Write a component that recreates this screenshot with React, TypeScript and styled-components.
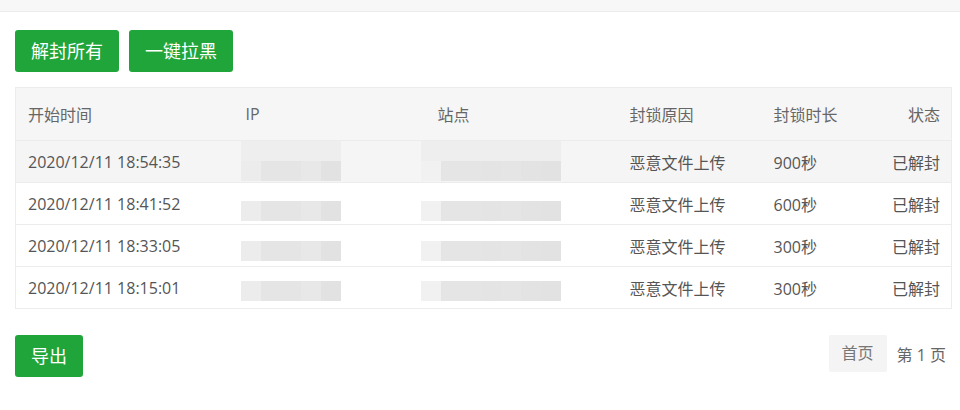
import React, { ReactElement } from 'react'
import styled, { createGlobalStyle } from 'styled-components'

const GlobalStyle = createGlobalStyle`
    html, body {
        margin: 0;
        padding: 0;
        background: #fff;
    }
    body {
        font-family: "Open Sans", "Noto Sans CJK SC", sans-serif;
        color: #666;
    }
`

interface BanRecord {
    time: string;
    reason: string;
    duration: string;
    status: string;
}

const records: BanRecord[] = [
    { time: '2020/12/11 18:54:35', reason: '恶意文件上传', duration: '900秒', status: '已解封' },
    { time: '2020/12/11 18:41:52', reason: '恶意文件上传', duration: '600秒', status: '已解封' },
    { time: '2020/12/11 18:33:05', reason: '恶意文件上传', duration: '300秒', status: '已解封' },
    { time: '2020/12/11 18:15:01', reason: '恶意文件上传', duration: '300秒', status: '已解封' },
]

// redacted cells are shown as a pixel mosaic
const ipTiles = ['#ececec', '#e5e5e5', '#e5e5e5', '#e8e8e8', '#e2e2e2']
const siteTiles = ['#f1f1f1', '#e5e5e5', '#e5e5e5', '#e4e4e4', '#e5e5e5', '#e3e3e3', '#e2e2e2']
const mosaicTops = [0, 18, 16, 14]

const TopStrip = styled.div`
    height: 11px;
    background: #f7f7f7;
    border-bottom: 1px solid #ececec;
`
const Content = styled.div`
    padding: 18px 8px 0 15px;
`
const Toolbar = styled.div`
    display: flex;
    gap: 10px;
    margin-bottom: 15px;
`
const GreenButton = styled.button`
    height: 42px;
    padding: 0 16px;
    border: none;
    border-radius: 3px;
    background: #20a53a;
    color: #fff;
    font-family: "Open Sans", "Noto Sans CJK SC", sans-serif;
    font-size: 18px;
    line-height: 42px;
    cursor: pointer;
`
const Table = styled.table`
    width: 937px;
    border-collapse: collapse;
    table-layout: fixed;
    border: 1px solid #ececec;
    font-size: 16px;
`
const HeadCell = styled.th<{ $right?: boolean }>`
    height: 52px;
    padding: 0 11px 0 12px;
    background: #f6f6f6;
    font-weight: normal;
    color: #666;
    text-align: ${p => (p.$right ? 'right' : 'left')};
    border-bottom: 1px solid #ececec;
`
const Row = styled.tr<{ $hover?: boolean }>`
    background: ${p => (p.$hover ? '#f5f5f5' : '#fff')};
`
const Cell = styled.td<{ $right?: boolean }>`
    height: 41px;
    padding: 0 11px 0 12px;
    color: #555;
    text-align: ${p => (p.$right ? 'right' : 'left')};
    border-bottom: 1px solid #ececec;
    white-space: nowrap;
`
const MosaicCell = styled.td`
    height: 41px;
    padding: 0 0 0 7px;
    border-bottom: 1px solid #ececec;
    vertical-align: top;
`
const Mosaic = styled.div<{ $top: number; $shift: number }>`
    display: flex;
    flex-direction: column;
    margin-top: ${p => p.$top}px;
    margin-left: ${p => p.$shift}px;
`
const TileRow = styled.div`
    display: flex;
`
const Tile = styled.span<{ $shade: string }>`
    width: 20px;
    height: 20px;
    background: ${p => p.$shade};
`
const Footer = styled.div`
    display: flex;
    justify-content: space-between;
    align-items: flex-start;
    margin-top: 26px;
`
const Pager = styled.div`
    display: flex;
    align-items: center;
    gap: 10px;
    font-size: 16px;
    color: #666;
`
const PageLink = styled.span`
    height: 37px;
    line-height: 37px;
    padding: 0 13px;
    background: #f4f4f4;
    border-radius: 2px;
    color: #777;
`
const PageInfo = styled.span`
    padding-right: 6px;
`

interface MosaicProps {
    tiles: string[];
    rows: number;
    top: number;
    shift: number;
}

function MosaicStrip({ tiles, rows, top, shift }: MosaicProps): ReactElement {
    return (
        <Mosaic $top={top} $shift={shift}>
            {Array.from({ length: rows }).map((_, r) => (
                <TileRow key={r}>
                    {tiles.map((shade, i) => (
                        <Tile key={i} $shade={rows > 1 && r === 0 ? '#eeeeee' : shade} />
                    ))}
                </TileRow>
            ))}
        </Mosaic>
    )
}

export default function App(): ReactElement {
    return (
        <>
            <GlobalStyle />
            <TopStrip />
            <Content>
                <Toolbar>
                    <GreenButton>解封所有</GreenButton>
                    <GreenButton>一键拉黑</GreenButton>
                </Toolbar>
                <Table>
                    <colgroup>
                        <col style={{ width: 218 }} />
                        <col style={{ width: 192 }} />
                        <col style={{ width: 192 }} />
                        <col style={{ width: 144 }} />
                        <col style={{ width: 100 }} />
                        <col />
                    </colgroup>
                    <thead>
                        <tr>
                            <HeadCell>开始时间</HeadCell>
                            <HeadCell>IP</HeadCell>
                            <HeadCell>站点</HeadCell>
                            <HeadCell>封锁原因</HeadCell>
                            <HeadCell>封锁时长</HeadCell>
                            <HeadCell $right>状态</HeadCell>
                        </tr>
                    </thead>
                    <tbody>
                        {records.map((rec, i) => (
                            <Row key={rec.time} $hover={i === 0}>
                                <Cell>{rec.time}</Cell>
                                <MosaicCell>
                                    <MosaicStrip tiles={ipTiles} rows={i === 0 ? 2 : 1} top={mosaicTops[i]} shift={0} />
                                </MosaicCell>
                                <MosaicCell>
                                    <MosaicStrip tiles={siteTiles} rows={i === 0 ? 2 : 1} top={mosaicTops[i]} shift={-12} />
                                </MosaicCell>
                                <Cell>{rec.reason}</Cell>
                                <Cell>{rec.duration}</Cell>
                                <Cell $right>{rec.status}</Cell>
                            </Row>
                        ))}
                    </tbody>
                </Table>
                <Footer>
                    <GreenButton>导出</GreenButton>
                    <Pager>
                        <PageLink>首页</PageLink>
                        <PageInfo>第 1 页</PageInfo>
                    </Pager>
                </Footer>
            </Content>
        </>
    )
}
